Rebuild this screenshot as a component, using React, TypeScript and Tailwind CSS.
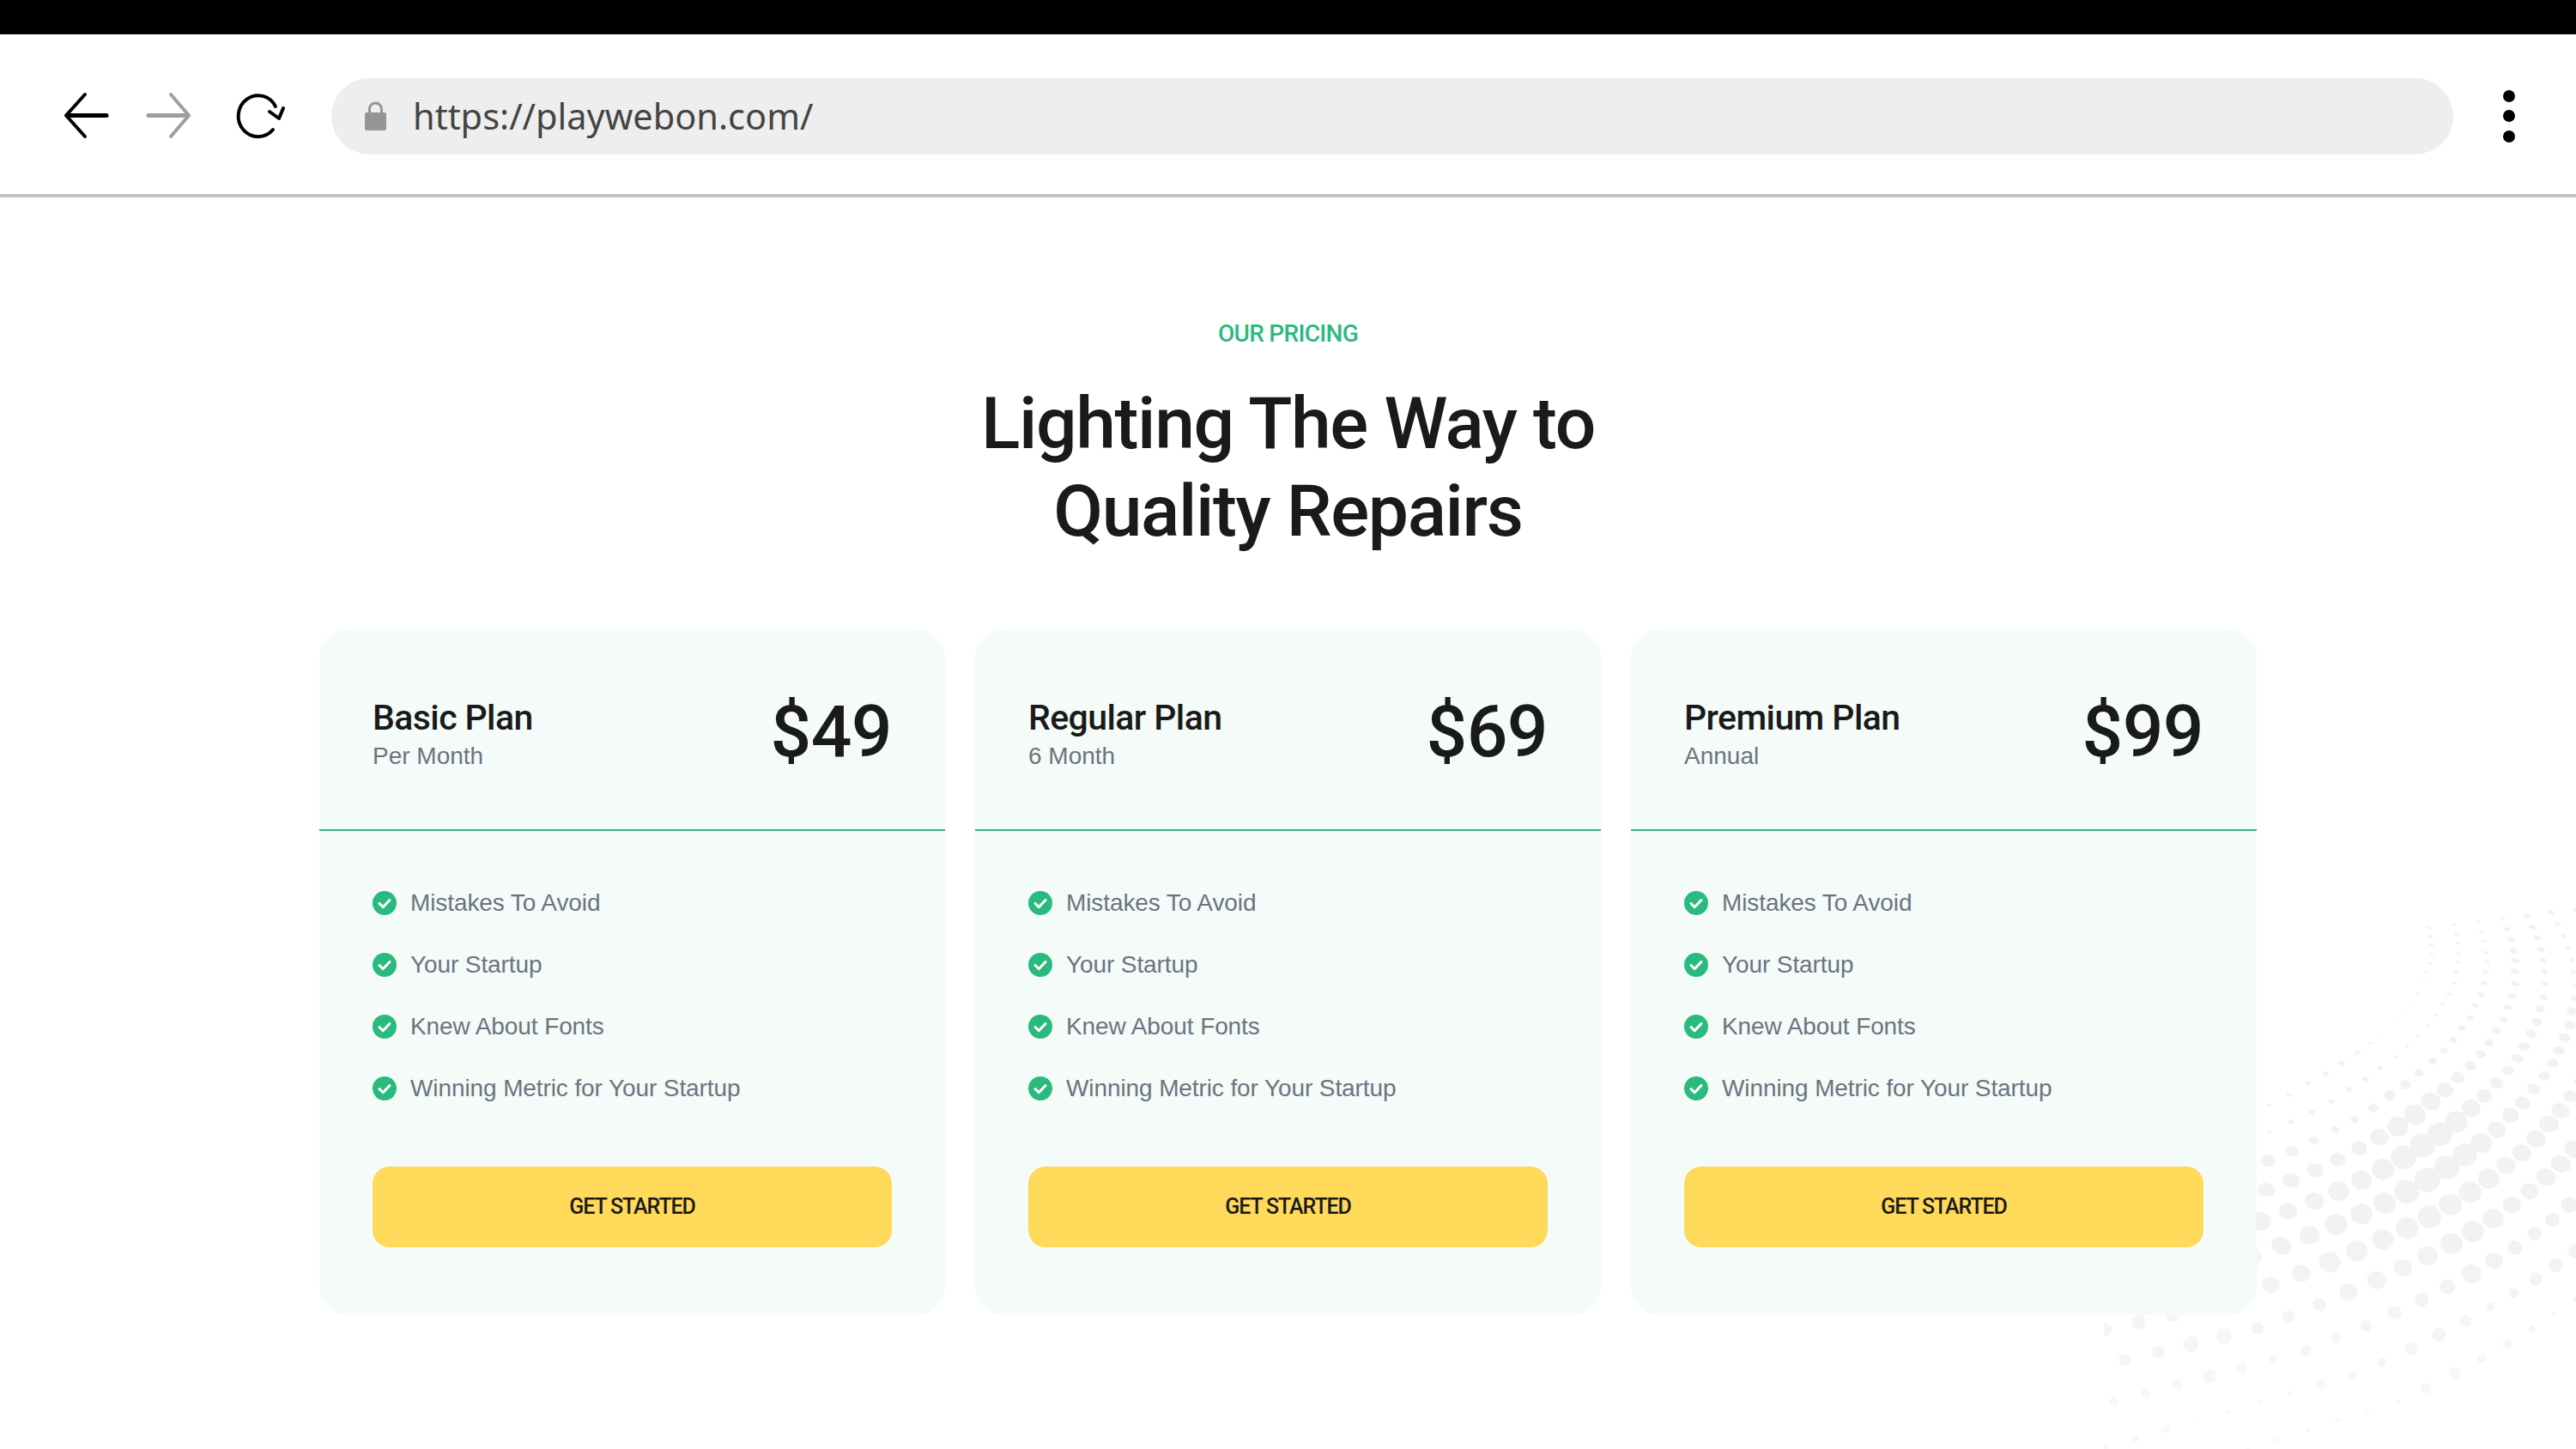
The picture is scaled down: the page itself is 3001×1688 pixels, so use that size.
const GREEN = "#2bba7e";

const plans = [
  { name: "Basic Plan", term: "Per Month", price: "$49" },
  { name: "Regular Plan", term: "6 Month", price: "$69" },
  { name: "Premium Plan", term: "Annual", price: "$99" },
];

const features = [
  "Mistakes To Avoid",
  "Your Startup",
  "Knew About Fonts",
  "Winning Metric for Your Startup",
];

// halftone wave, measured off the corner crop (x is 3x, y is 2.28x of the real px)
// one traced ray of dots, the others are offset from it
const YS = 2.279;
const ray = [
  [1245, 160], [1262, 188], [1275, 215], [1285, 245], [1290, 272], [1290, 300], [1290, 332], [1280, 365],
  [1265, 395], [1250, 428], [1225, 458], [1198, 490], [1170, 520], [1135, 550], [1090, 582], [1045, 615],
  [995, 645], [940, 680], [880, 712], [815, 740], [745, 770], [670, 800], [592, 828], [508, 855],
  [420, 880], [325, 905], [225, 930], [120, 955], [10, 980], [-105, 1005], [-225, 1030], [-350, 1055],
  [-480, 1070], [-610, 1085], [-740, 1100], [-870, 1115], [-1000, 1130], [-1130, 1145], [-1260, 1160], [-1390, 1175],
  [-1520, 1190], [-1650, 1205],
];

// x, y, rx, ry of sampled dots, blended by distance
const sizes = [
  [990, 845, 15, 14], [1290, 272, 5, 3], [1160, 205, 3, 1.3], [860, 380, 1.5, 1], [620, 585, 3.5, 2.6],
  [400, 685, 3, 1.4], [440, 885, 10, 8], [420, 965, 12, 10.5], [190, 1275, 9, 9], [40, 1495, 4.5, 4.5],
  [800, 1520, 2, 2], [1010, 1240, 8, 8], [1475, 1262, 2, 2], [1430, 1050, 8, 8], [1470, 790, 12, 10],
  [1460, 500, 7, 5], [1490, 270, 3, 2], [1100, 1000, 13, 12], [700, 1000, 13, 12], [-60, 1243, 8.5, 8.5],
  [-24, 1322, 7.5, 7.5], [-105, 1427, 5.5, 5.5], [-78, 1518, 4, 4], [180, 1564, 1, 1], [480, 1505, 2.5, 2.5],
  [1230, 1250, 5, 5], [650, 1340, 6, 6],
];

function sizeAt(x: number, y: number) {
  let sum = 0;
  let rx = 0;
  let ry = 0;
  for (const [sx, sy, srx, sry] of sizes) {
    const d2 = (x - sx) ** 2 + (y - sy) ** 2 + 1;
    const w = 1 / (d2 * d2);
    sum += w;
    rx += w * srx;
    ry += w * sry;
  }
  return [rx / sum, ry / sum];
}

function buildDots() {
  const dots: { x: number; y: number; rx: number; ry: number; o: number }[] = [];
  for (let k = -3; k < 30; k++) {
    for (let t = 0; t < ray.length; t++) {
      const q = (Math.min(t, 30) / 25) * Math.max(k, 0) ** 2;
      const x = ray[t][0] + k * (85 + 3.6 * t) - 2.5 * q;
      const y = ray[t][1] + k * (-8 + 1.5 * t) + 2 * q;
      if (x < -147 || x > 1520 || y > 1570) continue;
      if (y > 1262 + 0.382 * (1475 - x)) continue;
      const [rx, ry] = sizeAt(x, y);
      dots.push({ x: x / 3 + 49, y: y / YS, rx, ry, o: 1 - 0.5 * Math.min(1, Math.max(0, (y - 1000) / 500)) });
    }
  }
  return dots;
}

const dots = buildDots();

function HalftoneWave() {
  return (
    <svg className="absolute right-0 bottom-0 pointer-events-none" width="550" height="688" viewBox="0 0 550 688">
      {dots.map((d, i) => (
        <ellipse
          key={i}
          cx={d.x}
          cy={d.y}
          rx={d.rx}
          ry={d.ry}
          fill="#f2f2f2"
          fillOpacity={d.o}
          transform={`rotate(15 ${d.x} ${d.y})`}
        />
      ))}
    </svg>
  );
}

function CheckIcon() {
  return (
    <svg width="28" height="28" viewBox="0 0 28 28" className="shrink-0">
      <circle cx="14" cy="14" r="14" fill={GREEN} />
      <path d="M8 14.5l4.2 4.2L20 10.5" fill="none" stroke="#fff" strokeWidth="3" strokeLinecap="round" strokeLinejoin="round" />
    </svg>
  );
}

function Toolbar() {
  return (
    <div className="h-[190px] bg-white border-b-4 border-[#c2c2c2] pt-1 flex items-center relative">
      <svg width="260" height="60" viewBox="0 -2 260 60" className="ml-[72px] shrink-0">
        <path d="M27 3L5 27.5L27 52" fill="none" stroke="#000" strokeWidth="4" strokeLinecap="round" strokeLinejoin="round" />
        <path d="M6 27.5H52" stroke="#000" strokeWidth="5" strokeLinecap="round" />
        <path d="M127 3L148 27.5L127 52" fill="none" stroke="#9e9e9e" strokeWidth="4" strokeLinecap="round" strokeLinejoin="round" />
        <path d="M101 27.5H147" stroke="#9e9e9e" strokeWidth="5" strokeLinecap="round" />
        <path d="M249 17A23 24 0 1 0 246 44" fill="none" stroke="#000" strokeWidth="4" strokeLinecap="round" />
        <path d="M242 23L253 31L258 19" fill="none" stroke="#000" strokeWidth="4" strokeLinecap="round" strokeLinejoin="round" />
      </svg>
      <div className="ml-[54px] w-[2472px] h-[89px] rounded-full bg-[#eeeeee] flex items-center pl-[39px] shrink-0">
        <svg width="25" height="34" viewBox="0 0 25 34" className="shrink-0">
          <path d="M5.5 14V9a7 7 0 0 1 14 0v5" fill="none" stroke="#959595" strokeWidth="3" />
          <rect x="0" y="13" width="25" height="21" rx="2" fill="#959595" />
        </svg>
        <span className="ml-[31px] mt-[2px] text-[41.5px] leading-none text-[#444444] font-['Noto_Sans',sans-serif]">https://playwebon.com/</span>
      </div>
      <div className="ml-[58px] flex flex-col gap-[9.5px]">
        <div className="w-[14px] h-[14px] rounded-full bg-black" />
        <div className="w-[14px] h-[14px] rounded-full bg-black" />
        <div className="w-[14px] h-[14px] rounded-full bg-black" />
      </div>
    </div>
  );
}

function PlanCard({ name, term, price }: { name: string; term: string; price: string }) {
  return (
    <div className="w-[729px] h-[799px] rounded-[34px] bg-[#f4fbf8] flex flex-col">
      <div className="h-[235px] border-b-2 border-[#33b583] px-[62px] flex justify-between shrink-0">
        <div className="pt-[78px]">
          <h3 className="text-[41px] leading-[50px] font-medium text-[#1a1a1a] font-['Roboto',sans-serif] tracking-[-0.6px]">{name}</h3>
          <p className="mt-[2px] text-[28px] leading-[36px] text-[#6b7480] font-['Liberation_Sans',sans-serif]">{term}</p>
        </div>
        <div className="pt-[70px] text-[84px] leading-[100px] font-medium text-[#1a1a1a] font-['Roboto',sans-serif] tracking-[-0.6px]">{price}</div>
      </div>
      <ul className="pt-[70px] px-[62px] flex flex-col gap-[44px]">
        {features.map((f) => (
          <li key={f} className="flex items-center gap-[16px] h-[28px]">
            <CheckIcon />
            <span className="text-[28px] leading-none text-[#6b7480] font-['Liberation_Sans',sans-serif] tracking-[-0.1px]">{f}</span>
          </li>
        ))}
      </ul>
      <button className="mt-[77px] mx-[62px] h-[94px] rounded-[20px] bg-[#ffd95a] text-[25px] font-medium text-[#1a1a1a] font-['Roboto',sans-serif] tracking-[-1.1px]">
        GET STARTED
      </button>
    </div>
  );
}

export default function App() {
  return (
    <div className="w-[3001px] h-[1688px] bg-white overflow-hidden relative">
      <div className="h-10 bg-black" />
      <Toolbar />
      <HalftoneWave />
      <main className="relative flex flex-col items-center">
        <p className="mt-[139px] text-[28px] leading-[40px] font-medium text-[#2bba7e] font-['Roboto',sans-serif] tracking-[-0.7px]">OUR PRICING</p>
        <h2 className="mt-[34px] text-center text-[84px] leading-[102px] font-medium text-[#1a1a1a] font-['Roboto',sans-serif] tracking-[-1.4px]">
          Lighting The Way to
          <br />
          Quality Repairs
        </h2>
        <div className="mt-[86px] flex gap-[35px]">
          {plans.map((p) => (
            <PlanCard key={p.name} {...p} />
          ))}
        </div>
      </main>
    </div>
  );
}
